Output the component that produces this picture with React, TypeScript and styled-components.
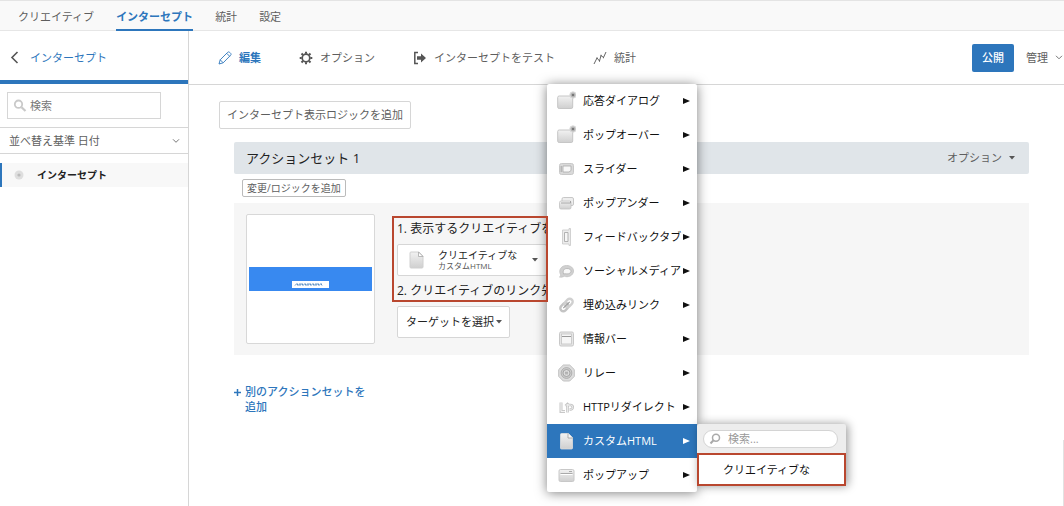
import React from "react";
import styled, { createGlobalStyle, css } from "styled-components";

const BLUE = "#2d76bc";
const TEXT = "#5e5e5e";
const DARK = "#222";
const RED = "#b9472f";
const LINE = "#d6d6d6";

const GlobalStyle = createGlobalStyle`
  *, *::before, *::after { box-sizing: border-box; }
  body {
    margin: 0;
    background: #fff;
    color: ${TEXT};
    font: 11px/16px "Open Sans", "Noto Sans CJK JP", sans-serif;
    overflow: hidden;
  }
  button, input, select { font: inherit; color: inherit; margin: 0; }
  button { cursor: pointer; }
  a { color: inherit; text-decoration: none; }
  ul { list-style: none; margin: 0; padding: 0; }
  svg { display: block; flex: none; }
`;

const Page = styled.div`
  display: flex;
  flex-direction: column;
  min-height: 100vh;
  position: relative;
`;

const TopNav = styled.nav`
  display: flex;
  gap: 22px;
  padding: 0 18px;
  background: #f9f9f9;
  border-top: 1px solid #e4e4e4;
  box-shadow: inset 0 -1px 0 #e6e6e6;
`;

const TopLink = styled.a<{ $active?: boolean }>`
  padding: 8px 0 4px;
  border-bottom: 2px solid ${(p) => (p.$active ? BLUE : "transparent")};
  ${(p) => p.$active && css`color: ${BLUE}; font-weight: 600;`}
`;

const Body = styled.div`
  display: flex;
  flex: 1;
`;

const Sidebar = styled.aside`
  flex: 0 0 189px;
  min-width: 0;
  border-right: 1px solid ${LINE};
`;

const BackLink = styled.a`
  display: flex;
  align-items: center;
  gap: 11px;
  height: 53px;
  padding: 4px 10px 0;
  border-bottom: 4px solid ${BLUE};
  color: ${BLUE};
  > svg { color: #555; }
`;

const SearchBox = styled.label`
  display: flex;
  align-items: center;
  gap: 3px;
  height: 27px;
  margin: 8px 27px 8px 7px;
  padding: 0 5px;
  border: 1px solid ${LINE};
`;

const PlainInput = styled.input`
  flex: 1;
  width: 100%;
  min-width: 0;
  padding: 0;
  border: 0;
  outline: 0;
  background: transparent;
  &::placeholder { color: #777; opacity: 1; }
`;

const SelectWrap = styled.div`
  position: relative;
  > svg {
    position: absolute;
    top: 50%;
    right: 8px;
    transform: translateY(-50%);
    pointer-events: none;
  }
`;

const SortSelect = styled.select`
  display: block;
  width: 100%;
  height: 27px;
  padding: 0 9px;
  appearance: none;
  border: solid ${LINE};
  border-width: 1px 0;
  background: #fff;
`;

const SideItem = styled.a`
  display: flex;
  align-items: center;
  gap: 13px;
  height: 24px;
  margin-top: 9px;
  padding-left: 12px;
  border-left: 2px solid ${BLUE};
  background: #f8f8f8;
  color: #222;
  font-size: 10px;
  font-weight: 600;
`;

const Main = styled.main`
  flex: 1;
  min-width: 0;
`;

const Toolbar = styled.div`
  display: flex;
  align-items: center;
  gap: 38px;
  height: 54px;
  padding: 0 1px 0 29px;
  border-bottom: 1px solid ${LINE};
`;

const Tool = styled.button<{ $active?: boolean }>`
  display: flex;
  align-items: center;
  gap: 7px;
  padding: 0;
  border: 0;
  background: none;
  white-space: nowrap;
  ${(p) => p.$active && css`color: ${BLUE}; font-weight: 700;`}
`;

const Actions = styled.div`
  display: flex;
  align-items: center;
  gap: 12px;
  margin-left: auto;
`;

const Publish = styled.button`
  height: 28px;
  padding: 0 10px;
  border: 0;
  border-radius: 2px;
  background: ${BLUE};
  color: #fff;
  font-weight: 500;
`;

const Content = styled.div`
  padding: 16px 35px 0 30px;
`;

const OutlineButton = styled.button<{ $small?: boolean }>`
  display: block;
  height: ${(p) => (p.$small ? 18 : 28)}px;
  padding: 0 ${(p) => (p.$small ? 4 : 7)}px;
  border: 1px solid ${(p) => (p.$small ? "#bbb" : LINE)};
  border-radius: 2px;
  background: #fff;
  font-size: ${(p) => (p.$small ? 10 : 11)}px;
  line-height: 16px;
`;

const ActionSet = styled.section`
  margin: 13px 0 0 15px;
`;

const SetHeader = styled.header`
  display: flex;
  align-items: center;
  justify-content: space-between;
  height: 32px;
  margin-bottom: 5px;
  padding: 0 14px 0 12px;
  border-radius: 2px;
  background: #e0e5e9;
`;

const SetTitle = styled.h2`
  margin: 0;
  color: ${DARK};
  font-size: 13px;
  font-weight: 400;
`;

const LogicRow = styled.div`
  padding: 0 8px 6px;
`;

const Panel = styled.div`
  display: flex;
  gap: 22px;
  padding: 11px 12px;
  background: #f6f6f6;
`;

const Preview = styled.div`
  display: flex;
  align-items: center;
  width: 129px;
  height: 130px;
  padding: 2px;
  border: 1px solid #d8d8d8;
  border-radius: 2px;
  background: #fff;
`;

const Banner = styled.div`
  display: flex;
  flex: 1;
  align-items: flex-end;
  justify-content: center;
  height: 24px;
  padding-bottom: 3px;
  background: #3889f0;
`;

const Steps = styled.div`
  position: relative;
`;

const StepTitle = styled.h3`
  margin: 0;
  padding: 5px 0;
  color: ${DARK};
  font-size: 12px;
  font-weight: 400;
  line-height: 20px;
  white-space: nowrap;
`;

const CreativePicker = styled.button`
  display: flex;
  align-items: center;
  width: 150px;
  height: 32px;
  padding: 0 8px 0 11px;
  border: 1px solid ${LINE};
  border-radius: 2px;
  background: #fff;
  text-align: left;
`;

const PickerText = styled.span`
  display: flex;
  flex: 1;
  flex-direction: column;
  padding-left: 13px;
  color: ${DARK};
  font-size: 10px;
  line-height: 12px;
  white-space: nowrap;
`;

const PickerKind = styled.small`
  color: #555;
  font-size: 8px;
  line-height: 10px;
`;

const TargetWrap = styled(SelectWrap)`
  width: 113px;
`;

const TargetSelect = styled.select`
  width: 100%;
  height: 32px;
  padding: 0 8px;
  appearance: none;
  border: 1px solid ${LINE};
  border-radius: 2px;
  background: #fff;
  color: ${DARK};
`;

const StepsOutline = styled.div`
  position: absolute;
  top: 2px;
  left: -5px;
  z-index: 3;
  width: 156px;
  height: 86px;
  border: 2px solid ${RED};
  pointer-events: none;
`;

const AddSet = styled.a`
  display: flex;
  gap: 4px;
  width: 145px;
  margin-top: 29px;
  color: ${BLUE};
  font-weight: 500;
  line-height: 15px;
  > svg { margin-top: 5px; }
`;

const Menu = styled.ul`
  position: absolute;
  top: 84px;
  left: 547px;
  z-index: 2;
  width: 150px;
  border-radius: 2px;
  background: #fff;
  box-shadow: 0 1px 12px rgba(0, 0, 0, 0.5);
`;

const MenuItem = styled.li`
  position: relative;
`;

const MenuButton = styled.button<{ $active?: boolean }>`
  display: flex;
  align-items: center;
  gap: 7px;
  width: 100%;
  height: 34px;
  padding: 0 7px 0 10px;
  border: 0;
  background: ${(p) => (p.$active ? BLUE : "transparent")};
  color: ${(p) => (p.$active ? "#fff" : "#111")};
  white-space: nowrap;
`;

const MenuLabel = styled.span`
  flex: 1;
  min-width: 0;
  text-align: left;
`;

const Submenu = styled.div`
  position: absolute;
  top: 0;
  left: 100%;
  width: 149px;
  border-radius: 2px;
  background: #ededed;
  box-shadow: 2px 0 10px rgba(0, 0, 0, 0.4);
`;

const SubSearch = styled.label`
  display: flex;
  align-items: center;
  gap: 7px;
  height: 18px;
  margin: 6px 8px 5px 6px;
  padding: 0 5px;
  border: 1px solid #d4d4d4;
  border-radius: 9px;
  background: #fff;
  input::placeholder { color: #999; }
`;

const SubItem = styled.button`
  display: block;
  width: 100%;
  height: 33px;
  padding: 0 24px;
  border: 2px solid ${RED};
  background: #fff;
  color: #111;
  text-align: left;
`;

const ScrollThumb = styled.div`
  position: absolute;
  right: 0;
  bottom: 0;
  width: 1px;
  height: 66px;
  background: #e2e2e2;
`;

const Caret = ({ color = "#555" }: { color?: string }) => (
  <svg width="6" height="4" viewBox="0 0 6 4"><path d="M0 0h6L3 3.5z" fill={color} /></svg>
);

const Chevron = () => (
  <svg width="8" height="5" viewBox="0 0 8 5" fill="none" stroke="#777"><path d="M1 .8l3 3 3-3" /></svg>
);

const Arrow = () => (
  <svg width="7" height="6" viewBox="0 0 7 6"><path d="M0 0l7 3-7 3z" fill="currentColor" /></svg>
);

const SearchIcon = () => (
  <svg width="14" height="14" viewBox="0 0 14 14" fill="none" stroke="#c9c9c9">
    <circle cx="5.5" cy="5.2" r="3.7" strokeWidth="1.8" />
    <path d="M8.5 8.2l4 3.8" strokeWidth="2.2" />
  </svg>
);

const PageIcon = () => (
  <>
    <path d="M4.500 2.500h7l4 4V17a1 1 0 0 1-1 1h-10a1 1 0 0 1-1-1V3.500a1 1 0 0 1 1-1z" fill="url(#silver)" stroke="#ddd" strokeWidth=".8" />
    <path d="M11 2.500V7h4.500" fill="#f8f8f8" stroke="#999" strokeWidth=".8" />
  </>
);

const DialogIcon = () => (
  <>
    <rect x=".7" y="5" width="15" height="12.500" rx="1.500" fill="url(#silver)" stroke="#c6c6c6" />
    <circle cx="16" cy="4" r="3.200" fill="#bbb" stroke="#ddd" />
    <circle cx="16" cy="4" r="1.300" fill="#777" />
  </>
);

const menuIcons: Record<string, React.ReactNode> = {
  dialog: <DialogIcon />,
  slider: (
    <>
      <rect x="2.500" y="4.500" width="14" height="11" rx="2" fill="#d9d9d9" stroke="#c8c8c8" />
      <path d="M6 7h8v4.500L12 13H6z" fill="#f8f8f8" stroke="#aaa" strokeWidth=".8" />
      <path d="M4.200 7v6" stroke="#999" strokeWidth=".8" />
    </>
  ),
  under: (
    <>
      <rect x="5" y="4.500" width="11.500" height="8" rx="1.500" fill="#eee" stroke="#bbb" strokeWidth=".8" />
      <rect x="2.500" y="8" width="11.500" height="8" rx="1.500" fill="url(#silver)" stroke="#c2c2c2" strokeWidth=".8" />
      <path d="M4 10h9.500V8" fill="none" stroke="#999" strokeWidth=".8" />
    </>
  ),
  feedback: (
    <>
      <path d="M5.500 3h6.500V1.500h1.500v17H12V17H5.500z" fill="#ececec" stroke="#c8c8c8" strokeWidth=".8" />
      <path d="M7.500 5.500h3.500v9H7.500z" fill="#f6f6f6" stroke="#aaa" strokeWidth=".9" />
    </>
  ),
  social: (
    <>
      <path d="M2.500 16c1-.7 1.300-1.500 1-2.500C1.300 9 4.300 4.500 9.500 4.500c4.300 0 7 2.400 7 5.500s-2.700 5.700-6.500 5.700c-1 0-2-.2-2.700-.5C6 16 4 16.400 2.500 16z" fill="#d0d0d0" stroke="#c2c2c2" strokeWidth=".8" />
      <path d="M6.500 13c-1-4 1-5.500 3.500-5.500s4 1.200 4 2.700-1.600 2.700-4 2.700c-1.500 0-2.500-.4-3.500.1z" fill="#f8f8f8" stroke="#aaa" strokeWidth=".7" />
    </>
  ),
  link: (
    <g fill="none" transform="rotate(-45 9.500 10)">
      <rect x="2" y="7" width="9" height="6" rx="3" stroke="#c4c4c4" strokeWidth="2.400" />
      <rect x="8" y="7" width="9" height="6" rx="3" stroke="#d0d0d0" strokeWidth="2.400" />
      <path d="M5 10h9" stroke="#999" strokeWidth="1" />
    </g>
  ),
  info: (
    <>
      <rect x="2.500" y="3" width="14" height="14" rx="1.500" fill="#e6e6e6" stroke="#c8c8c8" />
      <rect x="4.500" y="5" width="10" height="10" fill="#f6f6f6" stroke="#c4c4c4" strokeWidth=".8" />
      <path d="M5 7.500h9" stroke="#999" />
    </>
  ),
  relay: (
    <>
      <path d="M6.300 2h6.400l4.600 4.600v6.800L12.700 18H6.300l-4.600-4.600V6.600z" fill="#ddd" stroke="#c2c2c2" />
      <circle cx="9.500" cy="10" r="5.400" fill="#ccc" stroke="#a4a4a4" strokeWidth=".8" />
      <circle cx="9.500" cy="10" r="3.500" fill="#dcdcdc" stroke="#999" strokeWidth=".8" />
      <path d="M8 9.300h3M8 10.800h3" stroke="#999" strokeWidth=".8" />
    </>
  ),
  redirect: (
    <g fill="none">
      <path d="M4 5.500v9h4" stroke="#c8c8c8" strokeWidth="3" />
      <path d="M4 5.500v9h4" stroke="#f4f4f4" />
      <path d="M10.500 15.500v-8M8.500 9l2-2 2 2M10.500 8h3a2 2 0 0 1 0 4.500h-1" stroke="#c4c4c4" strokeWidth="2.600" />
      <path d="M10.500 15.500v-8M8.500 9l2-2 2 2M10.500 8h3a2 2 0 0 1 0 4.500h-1" stroke="#f4f4f4" strokeWidth=".8" />
    </g>
  ),
  page: <PageIcon />,
  popup: (
    <>
      <rect x="2" y="4.500" width="15" height="12" rx="1.500" fill="url(#silver)" stroke="#c8c8c8" />
      <path d="M3.500 8.500h12" stroke="#aaa" />
      <path d="M3.500 9.500h12" stroke="#fff" />
      <path d="M12 6.500h3" stroke="#999" strokeWidth=".8" />
    </>
  ),
};

const items = [
  { icon: "dialog", label: "応答ダイアログ" },
  { icon: "dialog", label: "ポップオーバー" },
  { icon: "slider", label: "スライダー" },
  { icon: "under", label: "ポップアンダー" },
  { icon: "feedback", label: "フィードバックタブ" },
  { icon: "social", label: "ソーシャルメディア" },
  { icon: "link", label: "埋め込みリンク" },
  { icon: "info", label: "情報バー" },
  { icon: "relay", label: "リレー" },
  { icon: "redirect", label: "HTTPリダイレクト" },
  { icon: "page", label: "カスタムHTML", active: true },
  { icon: "popup", label: "ポップアップ" },
];

const MenuIcon = ({ name }: { name: string }) => (
  <svg width="19" height="20" viewBox="0 0 19 20">
    <defs>
      <linearGradient id="silver" x1="0" y1="0" x2="0" y2="1">
        <stop offset="0" stopColor="#f2f2f2" />
        <stop offset="1" stopColor="#cfcfcf" />
      </linearGradient>
    </defs>
    {menuIcons[name]}
  </svg>
);

export default function App() {
  return (
    <Page>
      <GlobalStyle />
      <TopNav>
        <TopLink href="#creatives">クリエイティブ</TopLink>
        <TopLink href="#intercepts" $active>インターセプト</TopLink>
        <TopLink href="#stats">統計</TopLink>
        <TopLink href="#settings">設定</TopLink>
      </TopNav>

      <Body>
        <Sidebar>
          <BackLink href="#back">
            <svg width="9" height="13" viewBox="0 0 9 13" fill="none" stroke="currentColor" strokeWidth="1.600"><path d="M7.500 1L2 6.500 7.500 12" /></svg>
            インターセプト
          </BackLink>
          <SearchBox>
            <SearchIcon />
            <PlainInput type="text" placeholder="検索" aria-label="検索" />
          </SearchBox>
          <SelectWrap>
            <SortSelect aria-label="並べ替え基準">
              <option>並べ替え基準 日付</option>
            </SortSelect>
            <Chevron />
          </SelectWrap>
          <SideItem href="#intercept">
            <svg width="10" height="10" viewBox="0 0 10 10"><circle cx="5" cy="5" r="4.500" fill="#dedede" /><circle cx="5" cy="5" r="1.600" fill="#bbb" /></svg>
            インターセプト
          </SideItem>
        </Sidebar>

        <Main>
          <Toolbar>
            <Tool type="button" $active>
              <svg width="14" height="14" viewBox="0 0 14 14" fill="none" stroke="currentColor" strokeWidth=".9"><path d="M1 13l1.200-4.200L9.700 1.300c.6-.6 1.400-.5 2 .1l.9.9c.6.6.6 1.400 0 2L5.200 11.800zM8.700 2.300l3 3M2.200 8.800l3 3" /></svg>
              編集
            </Tool>
            <Tool type="button">
              <svg width="14" height="14" viewBox="0 0 14 14" fill="none" stroke="#555">
                <circle cx="7" cy="7" r="3.800" strokeWidth="1.700" />
                <path d="M7 .7v2M7 11.300v2M.7 7h2M11.300 7h2M2.500 2.500L4 4M10 10l1.500 1.500M2.500 11.500L4 10M10 4l1.500-1.500" strokeWidth="2" />
              </svg>
              オプション
            </Tool>
            <Tool type="button">
              <svg width="14" height="14" viewBox="0 0 14 14"><path d="M5 1.500H1.800v11H5" fill="none" stroke="#555" strokeWidth="1.500" /><path d="M4 5.200h4V2.500L13 7l-5 4.500V8.800H4z" fill="#555" /></svg>
              インターセプトをテスト
            </Tool>
            <Tool type="button">
              <svg width="14" height="14" viewBox="0 0 14 14" fill="none" stroke="#666"><path d="M1 13l3-6 2.500 3L8 4.500l2.500 2L13 1" /><path d="M3.500 7h1M6 10h1M7.500 4.500h1M10 6.500h1" strokeWidth="1.600" /></svg>
              統計
            </Tool>
            <Actions>
              <Publish type="button">公開</Publish>
              <Tool type="button">管理<Chevron /></Tool>
            </Actions>
          </Toolbar>

          <Content>
            <OutlineButton type="button">インターセプト表示ロジックを追加</OutlineButton>
            <ActionSet>
              <SetHeader>
                <SetTitle>アクションセット 1</SetTitle>
                <Tool type="button">オプション<Caret /></Tool>
              </SetHeader>
              <LogicRow>
                <OutlineButton type="button" $small>変更/ロジックを追加</OutlineButton>
              </LogicRow>
              <Panel>
                <Preview>
                  <Banner>
                    <svg width="37" height="7" viewBox="0 0 37 7">
                      <path d="M0 0h37v7H0z" fill="#fff" />
                      <path d="M3 4.500l2-2 1 2 2-2v2l2-2 1 2 2-2 1 2 2-2v2l2-2 1 2 2-2 1 2 2-2v2l2-2 1 2 2-2 1 2" fill="none" stroke="#5b8fc4" />
                    </svg>
                  </Banner>
                </Preview>
                <Steps>
                  <StepTitle>1. 表示するクリエイティブを</StepTitle>
                  <CreativePicker type="button" aria-haspopup="menu">
                    <svg width="16" height="18" viewBox="2 1 16 18">
                      <path d="M4 2h8l4 4v11a1 1 0 0 1-1 1H4a1 1 0 0 1-1-1V3a1 1 0 0 1 1-1z" fill="url(#silver)" stroke="#d0d0d0" />
                      <path d="M11.500 2v4.500H16z" fill="#fff" stroke="#aaa" strokeWidth=".8" />
                    </svg>
                    <PickerText>
                      クリエイティブな
                      <PickerKind>カスタムHTML</PickerKind>
                    </PickerText>
                    <Caret />
                  </CreativePicker>
                  <StepTitle>2. クリエイティブのリンク先</StepTitle>
                  <TargetWrap>
                    <TargetSelect aria-label="ターゲットを選択">
                      <option>ターゲットを選択</option>
                    </TargetSelect>
                    <Caret />
                  </TargetWrap>
                  <StepsOutline />
                </Steps>
              </Panel>
              <AddSet href="#add">
                <svg width="7" height="7" viewBox="0 0 7 7" stroke="currentColor" strokeWidth="1.500"><path d="M3.500 0v7M0 3.500h7" /></svg>
                <span>別のアクションセットを<br />追加</span>
              </AddSet>
            </ActionSet>
          </Content>
        </Main>
      </Body>

      <Menu>
        {items.map((item) => (
          <MenuItem key={item.label}>
            <MenuButton type="button" $active={item.active}>
              <MenuIcon name={item.icon} />
              <MenuLabel>{item.label}</MenuLabel>
              <Arrow />
            </MenuButton>
            {item.active && (
              <Submenu>
                <SubSearch>
                  <svg width="12" height="12" viewBox="0 0 12 12" fill="none" stroke="#aaa"><circle cx="7" cy="4.800" r="3.500" strokeWidth="1.500" /><path d="M4.500 7.300L1.500 10.500" strokeWidth="2" /></svg>
                  <PlainInput type="text" placeholder="検索..." aria-label="クリエイティブを検索" />
                </SubSearch>
                <SubItem type="button">クリエイティブな</SubItem>
              </Submenu>
            )}
          </MenuItem>
        ))}
      </Menu>
      <ScrollThumb />
    </Page>
  );
}
